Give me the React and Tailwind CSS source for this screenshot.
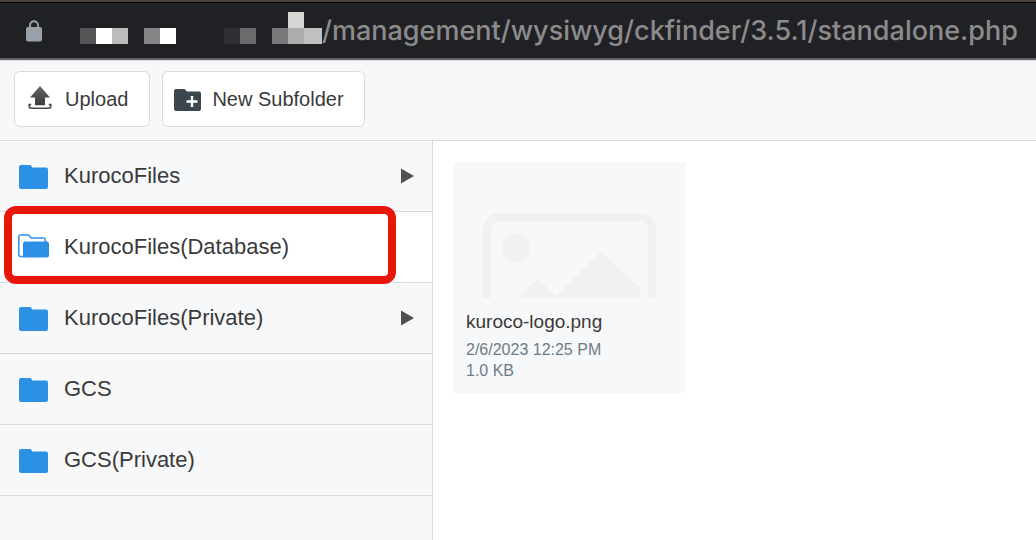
import React from "react";

const folders = [
  { name: "KurocoFiles", expandable: true },
  { name: "KurocoFiles(Database)", selected: true },
  { name: "KurocoFiles(Private)", expandable: true },
  { name: "GCS" },
  { name: "GCS(Private)" },
];

function LockIcon() {
  return (
    <svg className="ml-[26px] shrink-0" width="16" height="22" viewBox="0 0 16 22" aria-hidden="true">
      <path d="M4 8V5.2a4 4 0 0 1 8 0V8" fill="none" stroke="#9aa0a8" strokeWidth="2" />
      <rect x="0" y="7" width="16" height="14.5" rx="2" fill="#9aa0a8" />
    </svg>
  );
}

function HostMosaic() {
  const blocks = [
    [0, 16, "#555658"],
    [16, 16, "#ffffff"],
    [32, 16, "#bcbcbc"],
    [64, 16, "#858587"],
    [80, 16, "#ffffff"],
    [144, 16, "#2e2f32"],
    [160, 16, "#6b6b6d"],
    [192, 16, "#78797b"],
    [208, 16, "#adadad"],
    [224, 16, "#c1c1c1"],
    [240, 16, "#c1c1c1"],
    [208, 0, "#d6d6d4"],
  ];
  return (
    <svg className="mb-[5px] ml-[38px] shrink-0" width="242" height="32" viewBox="0 0 242 32" shapeRendering="crispEdges" aria-hidden="true">
      {blocks.map(([x, y, fill]) => (
        <rect key={`${x}-${y}`} x={x} y={y} width="16" height="16" fill={fill} />
      ))}
    </svg>
  );
}

function UploadIcon() {
  return (
    <svg width="24" height="26" viewBox="0 0 24 26" aria-hidden="true">
      <defs>
        <linearGradient id="upload-fill" x1="0" y1="0" x2="0" y2="1">
          <stop offset="0" stopColor="#666" />
          <stop offset="1" stopColor="#3c3c3c" />
        </linearGradient>
      </defs>
      <path d="M12 0 22 11.5H17V19.300H7V11.500H2Z" fill="url(#upload-fill)" />
      <path d="M3.200 18.600H1.200V20.300Q1.200 22.200 3.200 22.200H20.800Q22.800 22.200 22.800 20.300V18.600H20.800" fill="none" stroke="#484848" strokeWidth="1.6" />
    </svg>
  );
}

function NewFolderIcon() {
  return (
    <svg width="27" height="24" viewBox="0 -2 27 24" aria-hidden="true">
      <path d="M2 0H10.5L13 2.5H25Q27 2.5 27 4.5V20Q27 22 25 22H2Q0 22 0 20V2Q0 0 2 0Z" fill="#3c474d" />
      <path d="M18 7V18M12.5 12.5H23.5" stroke="#fff" strokeWidth="2.4" />
    </svg>
  );
}

function FolderIcon() {
  return (
    <svg width="31" height="26" viewBox="0 -2 31 26" aria-hidden="true">
      <path d="M3 0H12.5L14.5 2.6H28Q30 2.6 30 4.6V22Q30 24 28 24H3Q1 24 1 22V2Q1 0 3 0Z" fill="#2c90e5" />
    </svg>
  );
}

function OpenFolderIcon() {
  return (
    <svg width="31" height="26" viewBox="0 0 31 26" aria-hidden="true">
      <path d="M5 22.400H2.500Q.8 22.400 .8 20.700V2.700Q.8 1 2.500 1H10.500L13.300 4H25.500Q27.200 4 27.200 5.700V8" fill="none" stroke="#2c90e5" strokeWidth="1.5" />
      <path d="M7 7.500H29Q31 7.500 31 9.500V21.500Q31 23.500 29 23.500H5V9.500Q5 7.500 7 7.500Z" fill="#2c90e5" />
    </svg>
  );
}

function ImagePlaceholder() {
  return (
    <svg className="mx-auto block" width="173" height="85" viewBox="0 0 173 85" aria-hidden="true">
      <path d="M4 90V18Q4 4 18 4H155Q169 4 169 18V90" fill="none" stroke="#eff2f1" strokeWidth="8" />
      <circle cx="33" cy="35" r="14" fill="#eff2f1" />
      <path d="M34 85 54.500 65.500 73 83 118 38.500 157 75V85Z" fill="#eff2f1" />
    </svg>
  );
}

function FolderRow({ name, expandable, selected }) {
  return (
    <li className={`relative border-b border-[#d7dbde] ${selected ? "bg-white" : ""}`}>
      <button type="button" className="flex h-[70px] w-full items-center pr-[18px] pl-[18px] text-left text-[22px] leading-[26px]">
        {selected ? <OpenFolderIcon /> : <FolderIcon />}
        <span className="ml-[15px] flex-1">{name}</span>
        {expandable && (
          <svg width="13" height="16" viewBox="0 0 13 16" aria-hidden="true">
            <path d="M0 .5 13 8 0 15.500Z" fill="#505050" />
          </svg>
        )}
      </button>
      {selected && (
        <span className="pointer-events-none absolute -top-1.5 right-9 -bottom-0.5 left-1 z-10 rounded-xl border-8 border-[#e8170b]" />
      )}
    </li>
  );
}

export default function App() {
  return (
    <div className="flex min-h-screen flex-col bg-[#f7f8fa] font-['Liberation_Sans',Arial,sans-serif] text-[#3a3a3a]">
      <header className="border-t-2 border-[#49423c]">
        <div className="flex h-[58px] items-center border-t border-b-2 border-t-black border-b-[#626365] bg-[#202124]">
          <LockIcon />
          <HostMosaic />
          <input
            type="text"
            readOnly
            aria-label="Address"
            value="/management/wysiwyg/ckfinder/3.5.1/standalone.php"
            className="min-w-0 flex-1 bg-transparent font-[Inter,sans-serif] text-[27px] leading-9 font-medium text-[#8b8b8c] outline-none"
          />
        </div>
      </header>

      <div className="flex gap-3 border-t border-b border-t-[#dcdfe1] border-b-[#d7dbde] px-3.5 pt-2.5 pb-[13px]">
        <button type="button" className="flex h-14 items-center gap-[13px] rounded-md border border-[#d7dbde] bg-white pr-[21px] pl-[13px] text-xl">
          <UploadIcon />
          Upload
        </button>
        <button type="button" className="flex h-14 items-center gap-[11px] rounded-md border border-[#d7dbde] bg-white pr-5 pl-[11px] text-xl">
          <NewFolderIcon />
          New Subfolder
        </button>
      </div>

      <div className="flex flex-1">
        <nav aria-label="Folders" className="w-[433px] shrink-0 border-r border-[#d7dbde]">
          <ul>
            {folders.map((folder) => (
              <FolderRow key={folder.name} {...folder} />
            ))}
          </ul>
        </nav>
        <main className="flex-1 bg-white px-5 py-[21px]">
          <article className="w-58 bg-[#f7f8fa] pt-[51px] pb-3">
            <ImagePlaceholder />
            <div className="px-[13px] pt-3">
              <h2 className="text-[19px] leading-6">kuroco-logo.png</h2>
              <p className="mt-[5px] text-base leading-[21px] text-[#6c7c87]">
                2/6/2023 12:25 PM
                <br />
                1.0 KB
              </p>
            </div>
          </article>
        </main>
      </div>
    </div>
  );
}
